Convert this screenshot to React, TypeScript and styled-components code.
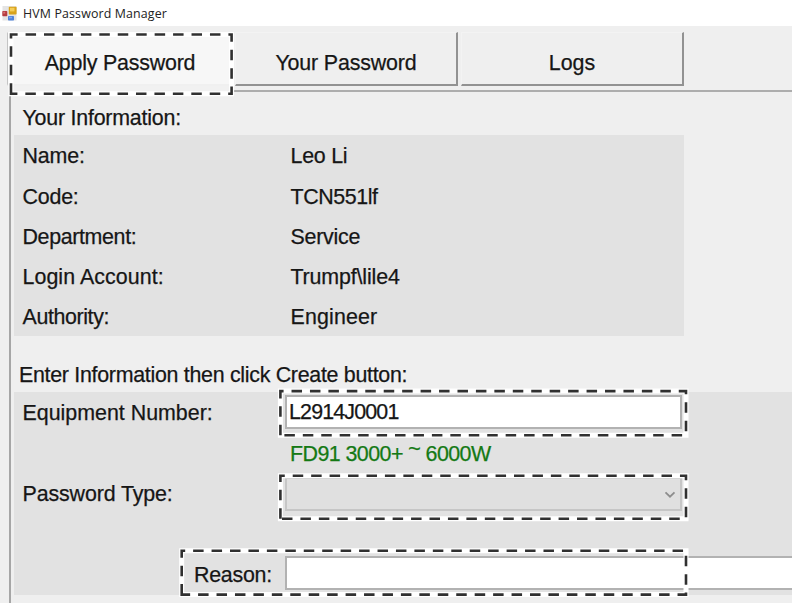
import React from "react";
import styled, { createGlobalStyle } from "styled-components";

const GlobalStyle = createGlobalStyle`
  * { box-sizing: border-box; }
  body { margin: 0; overflow: hidden; background: #efefef; }
`;

const Window = styled.div`
  position: relative;
  display: flex;
  flex-direction: column;
  width: 792px;
  height: 603px;
  overflow: hidden;
  background: #efefef;
  color: #161616;
  font-family: "Liberation Sans", Arial, sans-serif;
  font-size: 21.4px;
  line-height: 26px;
  white-space: nowrap;
`;

const TitleBar = styled.header`
  display: flex;
  align-items: center;
  flex: none;
  gap: 6px;
  height: 26px;
  padding-left: 2px;
  background: #fff;
`;

const Title = styled.span`
  padding-top: 1px;
  font-family: "Open Sans", "Noto Sans", sans-serif;
  font-size: 12.4px;
  line-height: 16px;
  letter-spacing: 0.14px;
  color: #222;
`;

const Tabs = styled.nav`
  display: flex;
  flex: none;
  gap: 3px;
  height: 64px;
  padding: 6px 0 4px 7px;
`;

const Tab = styled.div<{ $active?: boolean }>`
  position: relative;
  display: flex;
  align-items: center;
  justify-content: center;
  width: ${(p) => (p.$active ? 225 : 223)}px;
  height: 54px;
  padding: ${(p) => (p.$active ? "9px 0 0 2px" : "8px 0 0")};
  background: ${(p) => (p.$active ? "#f7f7f7" : "#efefef")};
  border-style: solid;
  border-width: 1px 2px 2px 1px;
  border-color: ${(p) => (p.$active ? "#f7f7f7 #f7f7f7 #f0f0f0 #c4c4c4" : "#f3f3f3 #929292 #929292 #f3f3f3")};
  box-shadow: ${(p) => (p.$active ? "2px 6px 0 #f1f1f1" : "none")};
`;

const Text = styled.span<{ $spacing?: number }>`
  letter-spacing: ${(p) => p.$spacing ?? 0}px;
  -webkit-text-stroke: 0.25px currentColor;
`;

const Raised = styled.span`
  vertical-align: 5px;
  line-height: 0;
`;

const Page = styled.main`
  flex: 1;
  margin-left: 9px;
  padding-left: 3px;
  border-top: 2px solid #adadad;
  border-left: 2px solid #a6a6a6;
`;

const Heading = styled.div<{ $height: number; $indent: number; $top: number }>`
  height: ${(p) => p.$height}px;
  padding: ${(p) => p.$top}px 0 0 ${(p) => p.$indent}px;
`;

const InfoPanel = styled.section`
  display: grid;
  grid-template-columns: 268px 1fr;
  grid-template-rows: repeat(5, 40.2px);
  align-items: center;
  width: 670px;
  height: 201px;
  padding: 1.4px 0 0 8.5px;
  background: #e2e2e2;
`;

const FormPanel = styled.section`
  display: flex;
  flex-direction: column;
  height: 203px;
  padding-top: 3px;
  background: #e2e2e2;
`;

const FormRow = styled.div<{ $height: number }>`
  display: flex;
  height: ${(p) => p.$height}px;
`;

const Label = styled.label<{ $indent?: number; $top?: number }>`
  flex: none;
  width: 271px;
  padding: ${(p) => p.$top ?? 6}px 0 0 ${(p) => p.$indent ?? 8.5}px;
`;

const Field = styled.div<{ $wide?: boolean; $disabled?: boolean }>`
  display: flex;
  align-items: center;
  flex: none;
  width: ${(p) => (p.$wide ? 540 : 397)}px;
  height: 34px;
  padding: 0 4px 0 2px;
  background: ${(p) => (p.$disabled ? "#e0e0e0" : "#fff")};
  border: 2px solid ${(p) => (p.$disabled ? "#c6c6c6" : "#b2b2b2")};
  justify-content: ${(p) => (p.$disabled ? "flex-end" : "flex-start")};
`;

const Hint = styled.div`
  padding-left: 276px;
  color: #147914;
`;

const MarqueeLayer = styled.svg`
  position: absolute;
  top: 0;
  left: 0;
  pointer-events: none;
`;

const AppIcon = () => (
  <svg width="15" height="16" viewBox="0 0 15 16">
    <rect x="0.5" y="1" width="14" height="14.5" fill="#e4e4e4" />
    <rect x="0.3" y="6" width="5" height="5.2" rx="0.7" fill="#b63d41" />
    <rect x="1.2" y="6.8" width="2" height="1.8" fill="#d67375" />
    <rect x="6.8" y="1.8" width="7.8" height="7.7" rx="0.8" fill="#d9a31c" />
    <rect x="8" y="2.8" width="4.5" height="3.6" fill="#f5cd58" />
    <rect x="6" y="11" width="6" height="4.4" rx="0.7" fill="#4f83dc" />
    <rect x="7" y="11.8" width="3" height="1.5" fill="#80a8ee" />
  </svg>
);

const Chevron = () => (
  <svg width="12" height="10" viewBox="0 0 12 10">
    <path d="M1.5 3.4 L6 7.7 L10.5 3.4" fill="none" stroke="#8d8d8d" strokeWidth="1.8" />
  </svg>
);

const marquees = [
  { x: 11, y: 34.5, w: 220.6, h: 59.2 },
  { x: 280.4, y: 391.1, w: 405.6, h: 44.2 },
  { x: 280.4, y: 475.8, w: 405.6, h: 43 },
  { x: 181.7, y: 550.7, w: 504.3, h: 43.9 },
];

const info: [string, string, number, number][] = [
  ["Name:", "Leo Li", -0.15, -0.25],
  ["Code:", "TCN551lf", -0.2, -0.4],
  ["Department:", "Service", -0.35, -0.25],
  ["Login Account:", "Trumpf\\lile4", 0.06, -0.15],
  ["Authority:", "Engineer", -0.38, 0.15],
];

export default function App() {
  return (
    <>
      <GlobalStyle />
      <Window>
        <TitleBar>
          <AppIcon />
          <Title>HVM Password Manager</Title>
        </TitleBar>
        <Tabs>
          <Tab $active><Text $spacing={-0.2}>Apply Password</Text></Tab>
          <Tab><Text $spacing={-0.15}>Your Password</Text></Tab>
          <Tab><Text>Logs</Text></Tab>
        </Tabs>
        <Page>
          <Heading $height={43} $indent={8.5} $top={13}>
            <Text $spacing={-0.22}>Your Information:</Text>
          </Heading>
          <InfoPanel>
            {info.map(([label, value, a, b]) => (
              <React.Fragment key={label}>
                <Text $spacing={a}>{label}</Text>
                <Text $spacing={b}>{value}</Text>
              </React.Fragment>
            ))}
          </InfoPanel>
          <Heading $height={56} $indent={5} $top={26}>
            <Text $spacing={-0.29}>Enter Information then click Create button:</Text>
          </Heading>
          <FormPanel>
            <FormRow $height={46}>
              <Label $top={5}><Text>Equipment Number:</Text></Label>
              <Field><Text $spacing={-0.83}>L2914J0001</Text></Field>
            </FormRow>
            <FormRow $height={36}>
              <Hint><Text $spacing={-0.55}>FD91 3000+ <Raised>~</Raised> 6000W</Text></Hint>
            </FormRow>
            <FormRow $height={79}>
              <Label $top={4}><Text $spacing={-0.12}>Password Type:</Text></Label>
              <Field $disabled><Chevron /></Field>
            </FormRow>
            <FormRow $height={34}>
              <Label $indent={180}><Text $spacing={-0.25}>Reason:</Text></Label>
              <Field $wide />
            </FormRow>
          </FormPanel>
        </Page>
        <MarqueeLayer width="792" height="603" fill="none">
          {marquees.map((m) => {
            const d = `M${m.x} ${m.y + m.h} v${-m.h} h${m.w} v${m.h} Z`;
            return (
              <g key={m.y}>
                <path d={d} stroke="#fff" strokeWidth="5" />
                <path d={d} stroke="#303030" strokeWidth="2.6" strokeDasharray="10.5 7.94" />
              </g>
            );
          })}
        </MarqueeLayer>
      </Window>
    </>
  );
}
